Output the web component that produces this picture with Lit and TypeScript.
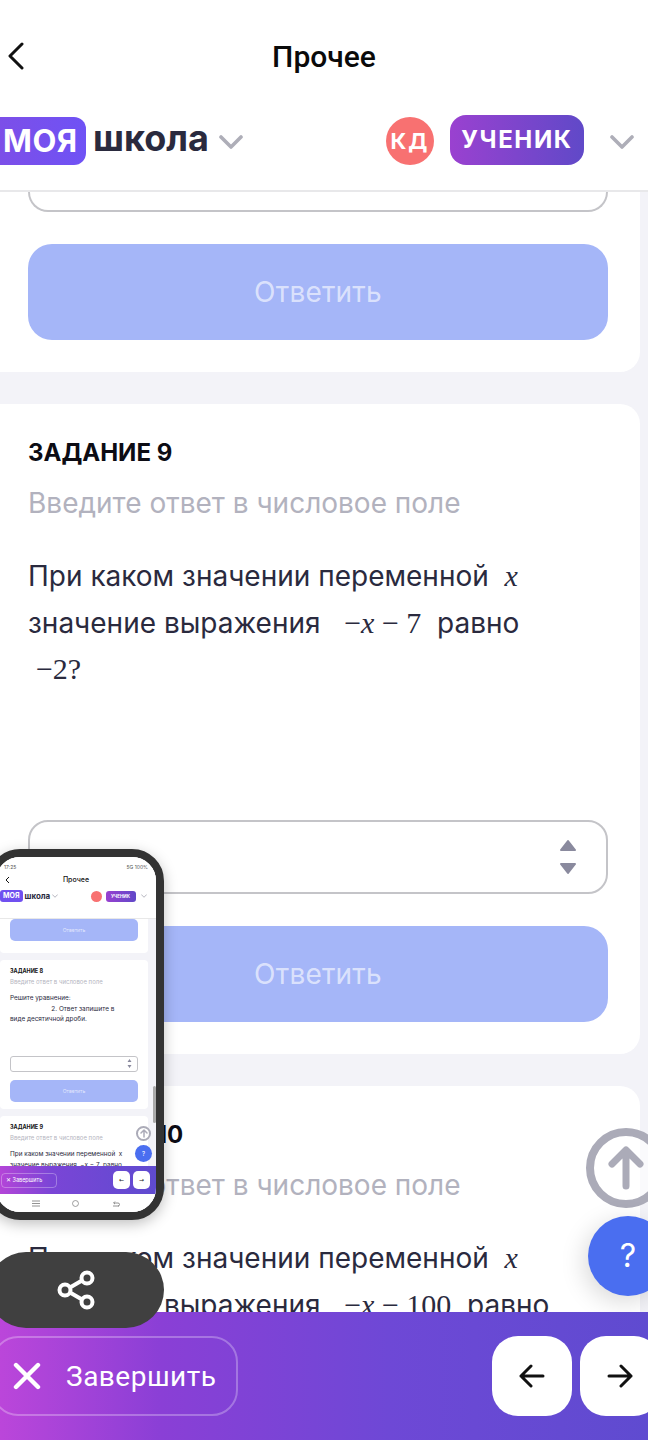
import { LitElement, html, css, svg } from "lit";
import { customElement } from "lit/decorators.js";

const chevron = (cls: string) => html`<svg class=${cls} viewBox="0 0 24 14" fill="none" stroke="currentColor" stroke-width="3.6" stroke-linecap="round" stroke-linejoin="round"><path d="M2 2l10 10L22 2"/></svg>`;

@customElement("mini-phone")
class MiniPhone extends LitElement {
  static styles = css`
    :host { display: block; position: absolute; left: -12px; top: 849px; width: 176px; height: 371px; box-sizing: border-box; border: 8px solid #333; border-radius: 32px; background: #fff; overflow: hidden; font-family: Inter, "Noto Sans", sans-serif; box-shadow: 0 4px 14px rgba(0,0,0,.25); }
    .screen { width: 160px; height: 355px; display: flex; flex-direction: column; position: relative; overflow: hidden; background: #f3f3f8; }
    .top { background: #fff; height: 62px; flex: none; position: relative; border-bottom: 1px solid #e8e8e8; box-sizing: border-box; }
    .status { display: flex; justify-content: space-between; padding: 7px 8px 0 8px; font-size: 5px; color: #555; height: 12px; box-sizing: border-box; }
    .title { text-align: center; font-size: 7px; font-weight: 500; color: #111; margin-top: 6px; line-height: 10px; position: relative; }
    .back { position: absolute; left: 9px; top: 1px; width: 5px; height: 8px; color: #111; }
    .logo { display: flex; align-items: center; margin-top: 5px; height: 12px; padding-left: 4px; }
    .moya { background: #7050f0; color: #fff; font-size: 7px; font-weight: 700; height: 12px; line-height: 12px; padding: 0 3px; border-radius: 3px; }
    .shk { font-size: 8px; font-weight: 700; color: #2a2a3e; margin-left: 2px; width: 27px; }
    .cv { width: 6px; height: 4px; color: #aeaeb8; }
    .kd { width: 11px; height: 11px; border-radius: 50%; background: #f87171; margin-left: 33px; }
    .role { width: 30px; height: 11px; margin-left: 4px; margin-right: 5px; border-radius: 3px; background: linear-gradient(90deg,#9840d0,#6048c8); color: #fff; font-size: 4.5px; font-weight: 700; text-align: center; line-height: 11px; }
    .flow { flex: 1; padding-right: 2px; overflow: hidden; }
    .card { background: #fff; border-radius: 4px; margin: 0 6px 7px 4px; padding: 0 10px; box-sizing: border-box; }
    .c1 { height: 37px; padding-top: 0; margin-top: -3px; padding-top: 3px; }
    .btn { height: 22px; border-radius: 5px; background: #a5b6f8; color: rgba(255,255,255,.7); text-align: center; font-size: 5px; line-height: 22px; }
    .c2 { height: 149px; padding-top: 7px; }
    .c3 { height: 60px; padding-top: 7px; }
    .h { font-size: 5.5px; font-weight: 700; color: #111; line-height: 8px; }
    .g { font-size: 6px; color: #b5b5c0; line-height: 8px; margin-top: 3px; white-space: nowrap; }
    .t { font-size: 6.4px; color: #2a2a3e; line-height: 10.5px; margin-top: 7px; white-space: nowrap; }
    .inp { height: 16px; border: 1px solid #c4c4c8; border-radius: 3px; margin-top: 31px; box-sizing: border-box; display: flex; align-items: center; justify-content: flex-end; padding-right: 5px; }
    .c2 .btn { margin-top: 8px; }
    .thumb { position: absolute; right: 0; top: 229px; width: 3px; height: 37px; background: #aaa; border-radius: 2px; }
    .up { position: absolute; left: 140px; top: 269px; width: 15px; height: 15px; border: 2px solid #ababb8; border-radius: 50%; box-sizing: border-box; display: flex; align-items: center; justify-content: center; background: #fff; }
    .q { position: absolute; left: 139px; top: 288px; width: 17px; height: 17px; border-radius: 50%; background: #4a6ef0; color: #fff; font-size: 6px; text-align: center; line-height: 17px; }
    .bar { position: absolute; left: 0; right: 0; top: 309px; height: 28px; background: linear-gradient(90deg,#b845d8,#7a45d6 35%,#5f4bd0); display: flex; align-items: center; padding: 0 6px 0 5px; box-sizing: border-box; }
    .fin { width: 56px; height: 15px; border: 1px solid rgba(255,255,255,.3); border-radius: 4px; box-sizing: border-box; color: #fff; font-size: 5.5px; line-height: 13px; padding-left: 4px; white-space: nowrap; }
    .nb { width: 17px; height: 18px; border-radius: 5px; background: #fff; margin-left: 3px; color: #222; font-size: 6px; text-align: center; line-height: 18px; font-family: "DejaVu Sans", sans-serif; }
    .sp { flex: 1; }
    .nav { position: absolute; left: 0; right: 0; top: 337px; height: 18px; background: #fff; display: flex; justify-content: space-around; align-items: center; color: #777; padding: 0 20px; box-sizing: border-box; }
  `;
  render() {
    return html`<div class="screen">
      <div class="top">
        <div class="status"><span>17:25</span><span>5G 100%</span></div>
        <div class="title"><svg class="back" viewBox="0 0 10 16" fill="none" stroke="currentColor" stroke-width="2"><path d="M8 2L2 8l6 6"/></svg>Прочее</div>
        <div class="logo"><span class="moya">МОЯ</span><span class="shk">школа</span>${chevron("cv")}<span class="kd"></span><span class="role">УЧЕНИК</span>${chevron("cv")}</div>
      </div>
      <div class="flow">
        <div class="card c1"><div class="btn">Ответить</div></div>
        <div class="card c2">
          <div class="h">ЗАДАНИЕ 8</div>
          <div class="g">Введите ответ в числовое поле</div>
          <div class="t">Решите уравнение:<br>&nbsp;&nbsp;&nbsp;&nbsp;&nbsp;&nbsp;&nbsp;&nbsp;&nbsp;&nbsp;&nbsp;&nbsp;&nbsp;&nbsp;&nbsp;&nbsp;&nbsp;&nbsp;&nbsp;&nbsp;&nbsp;&nbsp;&nbsp;2. Ответ запишите в<br>виде десятичной дроби.</div>
          <div class="inp"><svg width="5" height="11" viewBox="0 0 10 22" fill="#8a8a9e"><path d="M5 2l4 6H1zM5 20l4-6H1z"/></svg></div>
          <div class="btn">Ответить</div>
        </div>
        <div class="card c3">
          <div class="h">ЗАДАНИЕ 9</div>
          <div class="g">Введите ответ в числовое поле</div>
          <div class="t">При каком значении переменной&nbsp;&nbsp;x<br>значение выражения&nbsp;&nbsp;−x − 7&nbsp;&nbsp;равно</div>
        </div>
      </div>
      <div class="thumb"></div>
      <div class="up"><svg width="8" height="9" viewBox="0 0 16 18" fill="none" stroke="#ababb8" stroke-width="3" stroke-linecap="round" stroke-linejoin="round"><path d="M8 16V2M2 8l6-6 6 6"/></svg></div>
      <div class="q">?</div>
      <div class="bar"><div class="fin">✕ Завершить</div><span class="sp"></span><div class="nb">←</div><div class="nb">→</div></div>
      <div class="nav">
        <svg width="8" height="7" viewBox="0 0 8 7" stroke="currentColor" stroke-width=".8"><path d="M0 1h8M0 3.5h8M0 6h8"/></svg>
        <svg width="7" height="7" viewBox="0 0 8 8" fill="none" stroke="currentColor" stroke-width=".8"><circle cx="4" cy="4" r="3.4"/></svg>
        <svg width="8" height="7" viewBox="0 0 8 7" fill="none" stroke="currentColor" stroke-width=".8"><path d="M1 6h6M2 3h4a1.5 1.5 0 0 1 0 3M3 1.5L1.5 3 3 4"/></svg>
      </div>
    </div>`;
  }
}

@customElement("app-root")
class AppRoot extends LitElement {
  static styles = css`
    :host { display: block; width: 648px; height: 1440px; position: relative; overflow: hidden; background: #f3f3f8; font-family: Inter, "Noto Sans", sans-serif; }
    .page { height: 1440px; display: flex; flex-direction: column; }
    header { flex: none; height: 192px; background: #fff; border-bottom: 2px solid #e8e8ea; box-sizing: border-box; position: relative; z-index: 1; }
    .topbar { height: 112px; display: grid; grid-template-columns: 48px 1fr 48px; align-items: center; }
    .back { width: 18px; height: 28px; margin-left: 7px; color: #111; }
    .ttl { font-family: Roboto, sans-serif; font-size: 30px; font-weight: 500; color: #0a0a0a; text-align: center; }
    .brand { display: flex; align-items: center; height: 52px; margin-top: 2px; white-space: nowrap; }
    .moya { width: 86px; margin-left: 0; height: 48px; background: linear-gradient(90deg,#7c4fe8,#6f52f5); border-radius: 0 12px 12px 0; color: #fff; font: 700 31px/48px Inter, sans-serif; padding-left: 3px; box-sizing: border-box; letter-spacing: .5px; margin-top: 2px; overflow: hidden; }
    .shk { font: 700 36px Inter, sans-serif; color: #2a2a3e; margin-left: 7px; width: 126px; position: relative; top: -2px; }
    .cv { width: 24px; height: 14px; color: #aeaeb8; flex: none; position: relative; top: 2px; }
    .kd { width: 48px; height: 48px; border-radius: 50%; background: #f87171; color: #fff; font: 700 22px/48px Inter, sans-serif; letter-spacing: 2px; text-align: center; margin-left: 143px; flex: none; margin-top: 2px; }
    .role { width: 134px; height: 50px; border-radius: 16px; background: linear-gradient(90deg,#9a41d0,#6049c8); color: #fff; font: 700 24px/50px Inter, sans-serif; letter-spacing: 1.6px; text-align: center; margin-left: 16px; flex: none; }
    .brand .cv.r { margin-left: 26px; }
    main { flex: 1; min-height: 0; overflow: hidden; }
    .card { width: 640px; box-sizing: border-box; background: #fff; border-radius: 0 20px 20px 0; padding: 0 32px 32px 28px; margin-bottom: 32px; }
    .card.first { border-radius: 0 0 20px 0; }
    .input { height: 74px; border: 2px solid #c4c4c8; border-radius: 20px; box-sizing: border-box; display: flex; align-items: center; justify-content: flex-end; padding-right: 30px; }
    .first .input { height: 20px; border-top: 0; border-radius: 0 0 20px 20px; }
    .btn { height: 96px; border-radius: 24px; background: #a5b6f8; color: rgba(255,255,255,.62); font-size: 28px; line-height: 96px; text-align: center; margin-top: 32px; letter-spacing: .2px; }
    .task { padding-top: 34px; border-radius: 20px; border-top-left-radius: 0; border-bottom-left-radius: 0; }
    h2 { margin: 0; font-size: 24px; font-weight: 700; line-height: 30px; color: #0c0c14; }
    .sub { font-size: 28px; line-height: 36px; color: #b2b2be; margin-top: 17px; white-space: nowrap; }
    .txt { font-size: 28px; line-height: 46.5px; color: #2a2a3e; margin-top: 32px; height: 267px; }
    .m { font-family: "Liberation Serif", serif; font-size: 30px; color: #2a2a3e; }
    .mi { font-style: italic; }
    .up { position: absolute; left: 586px; top: 1128px; width: 80px; height: 80px; border: 8px solid #ababb8; border-radius: 50%; box-sizing: border-box; display: flex; align-items: center; justify-content: center; background: rgba(255,255,255,.6); }
    .q { position: absolute; left: 588px; top: 1216px; width: 80px; height: 80px; border-radius: 50%; background: #4a6ef0; color: #fff; font-size: 32px; line-height: 80px; text-align: center; box-shadow: -4px 6px 24px rgba(0,0,0,.15); }
    .share { position: absolute; left: -12px; top: 1252px; width: 176px; height: 76px; border-radius: 38px; background: #404040; display: flex; align-items: center; justify-content: center; color: #fff; z-index: 3; }
    footer { position: absolute; left: 0; right: 0; top: 1312px; height: 128px; background: linear-gradient(90deg,#bb46da 0%,#8a3fd6 25%,#6e48d6 60%,#5f4bd0 100%); display: flex; align-items: center; z-index: 2; padding-bottom: 0; box-sizing: border-box; }
    .fin { width: 246px; height: 80px; margin-left: -8px; border: 2px solid rgba(255,255,255,.28); border-radius: 26px; box-sizing: border-box; display: flex; align-items: center; color: #fff; font-size: 28px; padding-left: 19px; gap: 25px; font-family: Roboto, sans-serif; letter-spacing: .5px; }
    .spacer { flex: 1; }
    .nbtn { width: 80px; height: 80px; border-radius: 26px; background: #fff; display: flex; align-items: center; justify-content: center; flex: none; color: #111; }
    .nbtn + .nbtn { margin-left: 8px; margin-right: -72px; }
    footer .spacer { min-width: 0; }
    .right { margin-left: 254px; display: flex; }
  `;
  private task(n: number, line2: unknown, line3: unknown) {
    return html`<section class="card task">
      <h2>ЗАДАНИЕ ${n}</h2>
      <div class="sub">Введите ответ в числовое поле</div>
      <div class="txt">При каком значении переменной&nbsp; <span class="m mi">x</span><br>${line2}<br>${line3}</div>
      <div class="input"><svg width="16" height="36" viewBox="0 0 16 36" fill="#8a8a9e" stroke="#8a8a9e" stroke-width="2" stroke-linejoin="round"><path d="M8 2l7 9H1zM8 34l7-9H1z"/></svg></div>
      <div class="btn">Ответить</div>
    </section>`;
  }
  render() {
    return html`<div class="page">
      <header>
        <div class="topbar">
          <svg class="back" viewBox="0 0 18 28" fill="none" stroke="currentColor" stroke-width="3" stroke-linecap="round" stroke-linejoin="round"><path d="M15 2L3 14l12 12"/></svg>
          <div class="ttl">Прочее</div><span></span>
        </div>
        <div class="brand">
          <span class="moya">МОЯ</span><span class="shk">школа</span>${chevron("cv")}
          <span class="kd">КД</span><span class="role">УЧЕНИК</span>${chevron("cv r")}
        </div>
      </header>
      <main>
        <section class="card first">
          <div class="input"></div>
          <div class="btn">Ответить</div>
        </section>
        ${this.task(9, html`значение выражения &nbsp;&nbsp;<span class="m">−<span class="mi">x</span> − 7</span>&nbsp; равно`, html`&nbsp;<span class="m">−2?</span>`)}
        ${this.task(10, html`значение выражения &nbsp;&nbsp;<span class="m">−<span class="mi">x</span> − 100</span>&nbsp; равно`, html`&nbsp;<span class="m">−2?</span>`)}
      </main>
    </div>
    <mini-phone></mini-phone>
    <div class="up"><svg width="36" height="44" viewBox="0 0 36 44" fill="none" stroke="#ababb8" stroke-width="7" stroke-linecap="round" stroke-linejoin="round"><path d="M18 40V5M4 18L18 4l14 14"/></svg></div>
    <div class="q">?</div>
    <div class="share"><svg width="40" height="40" viewBox="0 0 40 40" fill="none" stroke="currentColor" stroke-width="4"><circle cx="31" cy="8" r="5.5"/><circle cx="9" cy="20" r="5.5"/><circle cx="31" cy="32" r="5.5"/><path d="M14 17.5l12-7M14 22.5l12 7"/></svg></div>
    <footer>
      <div class="fin"><svg width="28" height="28" viewBox="0 0 28 28" stroke="#fff" stroke-width="4.4" stroke-linecap="round"><path d="M3 3l22 22M25 3L3 25"/></svg>Завершить</div>
      <div class="right">
        <div class="nbtn"><svg width="26" height="24" viewBox="0 0 26 24" fill="none" stroke="currentColor" stroke-width="3" stroke-linecap="round" stroke-linejoin="round"><path d="M24 12H2M12 2L2 12l10 10"/></svg></div>
        <div class="nbtn"><svg width="26" height="24" viewBox="0 0 26 24" fill="none" stroke="currentColor" stroke-width="3" stroke-linecap="round" stroke-linejoin="round"><path d="M2 12h22M14 2l10 10-10 10"/></svg></div>
      </div>
    </footer>`;
  }
}
